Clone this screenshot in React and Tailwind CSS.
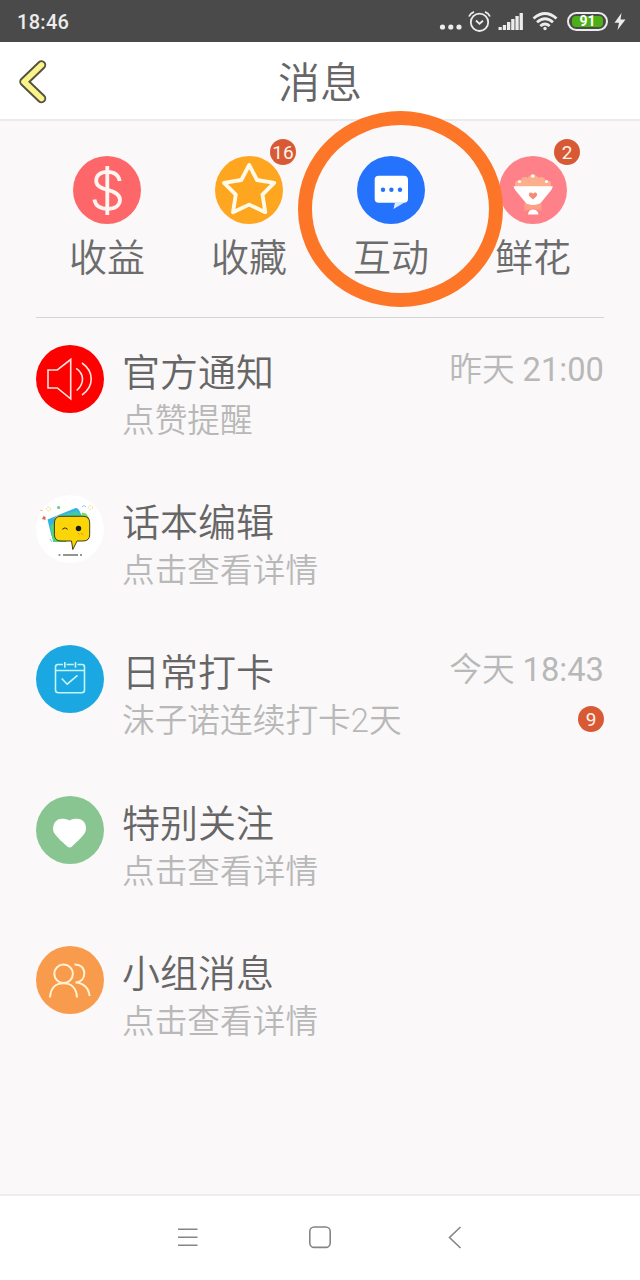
const tabs = [
  { label: "收益", icon: <DollarIcon />, color: "bg-[#fd6769]" },
  { label: "收藏", icon: <StarIcon />, color: "bg-[#fea61f]", badge: 16 },
  { label: "互动", icon: <ChatIcon />, color: "bg-[#2573fd]" },
  { label: "鲜花", icon: <FlowerIcon />, color: "bg-[#fe8089]", badge: 2 },
];

const messages = [
  { title: "官方通知", text: "点赞提醒", day: "昨天", time: "21:00", icon: <SpeakerIcon />, color: "bg-[#fe0000]" },
  { title: "话本编辑", text: "点击查看详情", icon: <EditorIcon />, color: "bg-white" },
  { title: "日常打卡", text: "沫子诺连续打卡2天", day: "今天", time: "18:43", unread: 9, icon: <CalendarIcon />, color: "bg-[#1ba8e2]" },
  { title: "特别关注", text: "点击查看详情", icon: <HeartIcon />, color: "bg-[#88c591]" },
  { title: "小组消息", text: "点击查看详情", icon: <GroupIcon />, color: "bg-[#f99b4c]" },
];

function DollarIcon() {
  return (
    <svg viewBox="0 0 68 68" className="size-full" fill="none" stroke="#fff5f2" strokeWidth="3.8">
      <path d="M34.3 10v49" />
      <path d="M46.7 25C45.5 18.5 41 15.8 34.5 15.8C27.5 15.8 23.2 19.5 23.2 24.5C23.2 30 27.5 32 34.5 33.8C42.5 35.8 47 38.3 47 43.8C47 49.5 42 52.8 34.8 52.8C27.3 52.8 22.5 50 21.4 43.5" />
    </svg>
  );
}

function StarIcon() {
  return (
    <svg viewBox="0 0 68 68" className="size-full" fill="none" stroke="#fffbe8" strokeWidth="3.8" strokeLinejoin="round">
      <path d="M34.2 9L42 24L59.2 26.8L47.5 38.6L50.3 56.2L34.2 48.6L18 56.2L20.8 38.6L9 26.8L26.3 24Z" />
    </svg>
  );
}

function ChatIcon() {
  return (
    <svg viewBox="0 0 68 68" className="size-full">
      <rect x="17.7" y="19.7" width="33.3" height="27" rx="4" fill="#fff" />
      <path d="M38 46L36.5 53L47.5 46.5Z" fill="#dbe8ff" />
      <g fill="#2573fd">
        <circle cx="26" cy="33.7" r="2.2" />
        <circle cx="34.4" cy="33.7" r="2.2" />
        <circle cx="43" cy="33.7" r="2.2" />
      </g>
    </svg>
  );
}

function FlowerIcon() {
  return (
    <svg viewBox="0 0 68 68" className="size-full">
      <g fill="#fdae8d">
        <circle cx="19.5" cy="28" r="3.6" />
        <circle cx="26" cy="25.5" r="4.5" />
        <circle cx="34" cy="24" r="5.5" />
        <circle cx="42" cy="25.5" r="4.5" />
        <circle cx="48.5" cy="28" r="3.6" />
        <path d="M16 31L20 25H48L52 31Z" />
      </g>
      <g fill="#fff">
        <circle cx="20.5" cy="25.5" r="1.6" />
        <circle cx="33.8" cy="20" r="1.8" />
        <circle cx="47.5" cy="25.5" r="1.6" />
        <path d="M14.5 30.3H53.8Q53.5 32.5 51.5 35L40 49H28.500L17 35Q14.800 32.500 14.500 30.300Z" />
        <path d="M29 58.5Q29.5 53.5 34 53.5Q38.8 53.5 39.5 58.5Z" />
      </g>
      <path d="M34 43.500L30.500 40.200C28.500 37.500 32 35 34 37.800C36 35 39.500 37.500 37.500 40.200Z" fill="#f58a75" />
      <path d="M25.500 47L34 49.500L42.500 47V55L34 52.500L25.500 55Z" fill="#fda085" />
    </svg>
  );
}

function SpeakerIcon() {
  return (
    <svg viewBox="0 0 68 68" className="size-full" fill="none" stroke="#ffe4e0" strokeWidth="1.6">
      <path d="M12 25H21.3L34.7 14.5V53.8L21.3 43H12Z" />
      <path d="M40.2 23.3Q46.5 27.5 46.5 34T40.7 45.5" />
      <path d="M46 18Q55.2 24.5 55.2 34T46 50" />
    </svg>
  );
}

function EditorIcon() {
  return (
    <svg viewBox="0 0 68 68" className="size-full">
      <path d="M14 25L39 17L46 27L30 47H17Z" fill="#55d37c" />
      <path d="M11.5 24.5L39 13.2Q41.5 12.5 43 15L46 21H22Q18 22 18 28V43L15.5 41Z" fill="#35b3e4" />
      <path d="M14.500 31L18.500 27V46L16.500 44Z" fill="#55d37c" />
      <path d="M22 21L41 16L46 21Z" fill="#45c9a5" />
      <path d="M46 17.500l4 1 3.500 5-2 1-6-4z" fill="#7cda62" />
      <path
        d="M25 21.3H47Q53.700 21.300 53.700 28V39.500Q53.700 46 47 46H41L36.800 54.500L35.500 46H25Q18.400 46 18.400 39.500V28Q18.400 21.300 25 21.300Z"
        fill="#fcd508"
        stroke="#2c2a12"
        strokeWidth="0.9"
      />
      <path d="M26.3 34.3Q29 31.3 31.7 34.3" fill="none" stroke="#2c2a12" strokeWidth="1" />
      <circle cx="42.5" cy="33.5" r="2.7" fill="#191919" />
      <path d="M42 38l1.5 1.5M45 38l2.5 2" stroke="#e28b22" strokeWidth="1" />
      <path d="M27 60H42" stroke="#666" strokeWidth="1.4" />
      <path d="M22.5 60h2M44 60h2" stroke="#777" strokeWidth="1.4" />
      <path d="M6 24l1.500-3 2 1v3z" fill="#e2674a" />
      <circle cx="22.6" cy="12.5" r="1.6" fill="#62cf85" />
      <circle cx="12.5" cy="14" r="2" fill="none" stroke="#f6dd6a" strokeDasharray="1.5 1" />
      <circle cx="54.5" cy="12.5" r="2" fill="none" stroke="#f6dd6a" strokeDasharray="1.5 1" />
      <path d="M46 12q1.500-3 4 0" fill="none" stroke="#83cff0" />
      <path d="M4.500 15.500h2" stroke="#f3b07a" />
      <path d="M14 44l2 3" stroke="#83cff0" />
    </svg>
  );
}

function CalendarIcon() {
  return (
    <svg viewBox="0 0 68 68" className="size-full" fill="none" stroke="#c5f6f5" strokeWidth="1.6">
      <path d="M27 19.500H22Q19.500 19.500 19.500 22V45Q19.500 47.800 22.500 47.800H45.500Q48.500 47.800 48.500 45V22Q48.500 19.500 46 19.500H41.500M30.500 19.500H37.800" />
      <path d="M20 25.500H48M28.800 17V22.700M39.500 17V22.700" />
      <path d="M25.700 33.500L31.200 39.200L41.500 30.300" />
    </svg>
  );
}

function HeartIcon() {
  return (
    <svg viewBox="0 0 68 68" className="size-full" fill="#fff">
      <path d="M33.500 24.500C36 22.800 42 22.300 45 23.500C50 26 51.500 33 48.500 37.500C46 41.500 39 47.500 36 50.500Q33.700 52.500 31.300 50.500C28 47.500 21 41.500 18.500 37.500C15.500 33 17.500 26 22 23.500C25 22.300 31 22.800 33.500 24.500Z" />
    </svg>
  );
}

function GroupIcon() {
  return (
    <svg viewBox="0 0 68 68" className="size-full" fill="none" stroke="#fff3d2" strokeWidth="2">
      <circle cx="27.6" cy="27.8" r="9.3" />
      <path d="M14 51.5C14.5 42.5 19.5 37.3 27.5 37.3S40.5 42.5 41 51.5" />
      <path d="M38.5 18.4C44.5 18.2 48.3 22 48.3 27.3C48.3 32.7 44.8 36.3 39.5 36.5C47.5 37 53 42 53.5 50" />
    </svg>
  );
}

function Badge({ children }) {
  return (
    <span className="flex size-[26px] items-center justify-center rounded-full bg-[#d85a35] pt-px text-[19px] leading-none text-[#fff3ec]">
      {children}
    </span>
  );
}

function StatusBar() {
  return (
    <div className="flex h-[42px] items-center bg-[#4a4a4a] pr-3.5 pl-[17px] text-[#ececec]">
      <span className="mt-0.5 mr-auto text-[20px] font-medium tracking-[0.3px]">18:46</span>
      <svg className="h-[42px] w-6" viewBox="0 0 24 42" fill="currentColor">
        <circle cx="3.500" cy="27" r="2.600" />
        <circle cx="11.800" cy="27" r="2.600" />
        <circle cx="20" cy="27" r="2.600" />
      </svg>
      <svg className="ml-1 h-[42px] w-[24px]" viewBox="0 0 24 42" fill="none" stroke="currentColor" strokeWidth="1.8">
        <circle cx="12.500" cy="22.300" r="8.700" />
        <path d="M9 20.500L12.500 23.800L16 20.800M2 16.500Q3.500 13 7 11.800M23 16.500Q21.500 13 18 11.800" />
      </svg>
      <svg className="ml-1.5 h-[42px] w-[26px]" viewBox="0 0 26 42" fill="currentColor">
        <path d="M1.500 27h3.300v3H1.500zM5.800 25h3.300v5H5.800zM10 22h3.300v8H10zM14.200 19h3.300v11h-3.300zM18.400 16h3.300v14h-3.300zM22.600 13h3.300v17h-3.300z" />
      </svg>
      <svg className="ml-2 h-[42px] w-[28px]" viewBox="0 0 28 42" fill="none" stroke="currentColor" strokeWidth="2.8">
        <path d="M2.500 18.500Q14 8.500 25.500 18.500M6 22.300Q14 15.200 22 22.300M9.300 26Q14 22 18.700 26" />
        <circle cx="14" cy="28.500" r="1" fill="currentColor" strokeWidth="1.500" />
      </svg>
      <div className="ml-2 flex h-[19px] w-[41px] items-center justify-center rounded-full border-2 border-[#ececec] p-[2px]">
        <div className="flex h-full w-[31px] items-center justify-center rounded-[4px] bg-[#4caf16] text-[14px] leading-none font-bold text-white">
          91
        </div>
      </div>
      <svg className="ml-1.5 h-[42px] w-3" viewBox="0 0 12 42" fill="currentColor">
        <path d="M7.500 13L0.500 22.800H5L3.500 30L11.500 19.500H6.500Z" />
      </svg>
    </div>
  );
}

function Header() {
  return (
    <header className="grid h-[79px] grid-cols-3 items-center border-b-2 border-[#ebebeb] bg-white">
      <svg className="mt-0.5 ml-[17px] h-[48px] w-8" viewBox="0 0 32 48" fill="none" strokeLinecap="round" strokeLinejoin="round">
        <path d="M24.500 7L7 23.700L24.500 40.500" stroke="#55533d" strokeWidth="9.500" />
        <path d="M24.500 7L7 23.700L24.500 40.500" stroke="#fbf48c" strokeWidth="5.600" />
      </svg>
      <h1 className="mt-1.5 text-center text-[42px] leading-none font-[350] text-[#666]">消息</h1>
    </header>
  );
}

function NavBar() {
  return (
    <nav className="h-[86px] border-t-2 border-[#eeecee] bg-white">
      <svg className="h-[84px] w-full" viewBox="0 0 640 84" fill="none" stroke="#858585" strokeWidth="1.6">
        <path d="M178 33.300h19.500M178 41.300h19.500M178 49.300h19.500" />
        <rect x="309.800" y="31" width="20.400" height="20.400" rx="4.500" />
        <path d="M460.500 31L449.500 41.500L460.500 52" />
      </svg>
    </nav>
  );
}

export default function App() {
  return (
    <div className="relative flex h-[1280px] w-[640px] flex-col overflow-hidden bg-[#faf8f9] font-[Roboto,'Noto_Sans_CJK_SC',sans-serif]">
      <StatusBar />
      <Header />

      <main className="flex-1 px-9 pt-[35px]">
        {/* Shortcuts */}
        <div className="grid h-[162px] grid-cols-4 border-b border-[#d5d3d5]">
          {tabs.map((tab) => (
            <div key={tab.label} className="flex flex-col items-center">
              <div className={`relative size-[68px] rounded-full ${tab.color}`}>
                {tab.icon}
                {tab.badge && (
                  <div className="absolute -top-[17px] -right-[13px]">
                    <Badge>{tab.badge}</Badge>
                  </div>
                )}
              </div>
              <span className="mt-[10px] text-[38px] leading-[48px] font-[350] text-[#6c6c6c]">{tab.label}</span>
            </div>
          ))}
        </div>

        {/* Message list */}
        <ul className="mt-[27px]">
          {messages.map((msg) => (
            <li key={msg.title} className="flex h-[150.2px] items-start">
              <div className={`size-[68px] shrink-0 rounded-full ${msg.color}`}>{msg.icon}</div>
              <div className="mt-1 ml-[18px] flex-1">
                <p className="text-[38px] leading-[48px] font-[350] text-[#666]">{msg.title}</p>
                <p className="text-[32.7px] leading-[48px] font-[350] text-[#b8b8b8]">{msg.text}</p>
              </div>
              <div className="flex flex-col items-end">
                {msg.time && (
                  <p className="mt-px text-[32.7px] leading-[48px] font-[350] text-[#b8b8b8]">
                    {msg.day} <span className="font-normal">{msg.time}</span>
                  </p>
                )}
                {msg.unread && (
                  <div className="mt-3">
                    <Badge>{msg.unread}</Badge>
                  </div>
                )}
              </div>
            </li>
          ))}
        </ul>
      </main>

      <NavBar />

      {/* Highlight ring around the third shortcut */}
      <div className="absolute top-[111px] left-[298px] h-[196px] w-[205px] rounded-[50%] border-[14px] border-[#fd7627]" />
    </div>
  );
}
